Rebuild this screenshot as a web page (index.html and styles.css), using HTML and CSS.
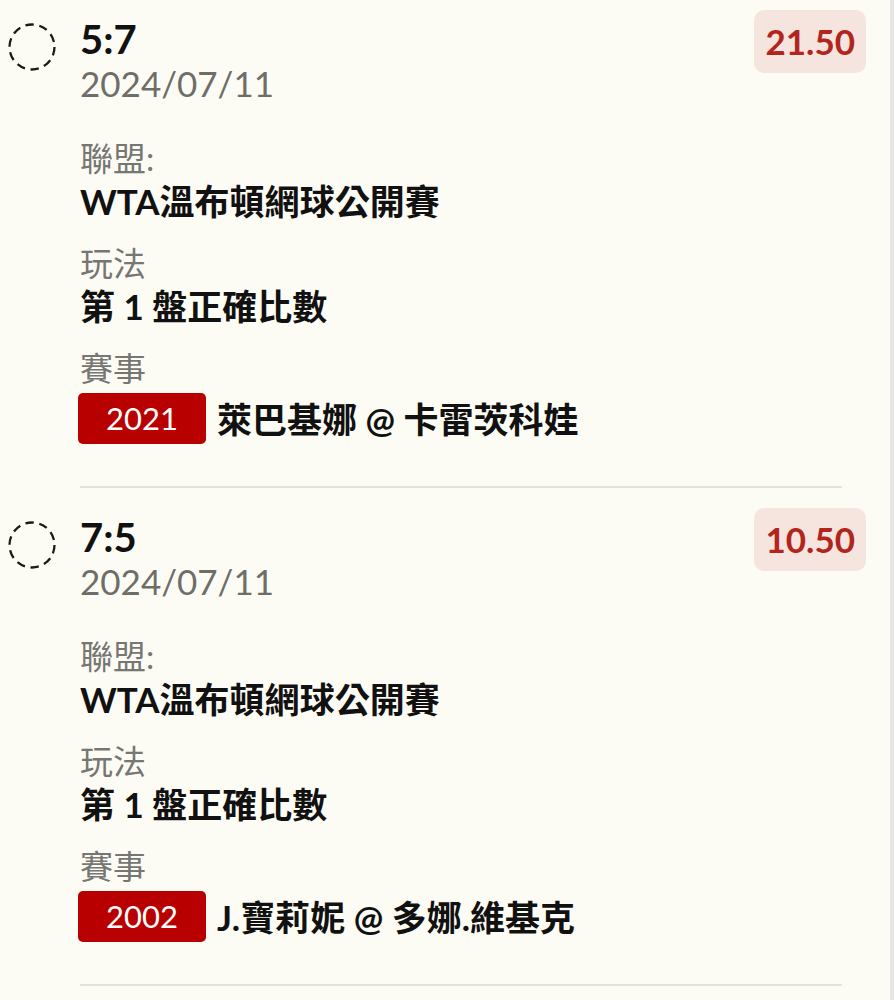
FILE: index.html
```html
<!DOCTYPE html>
<html>
	<head>
		<meta charset="UTF-8">
		<title>注單</title>
		<link rel="stylesheet" href="styles.css">
	</head>
	<body>
		<div class="page">
			<div class="bet">
				<svg class="check" width="48" height="48" viewBox="0 0 48 48">
					<circle cx="24" cy="24" r="22.5" fill="none" stroke="#1a1a1a" stroke-width="2.3" stroke-dasharray="8.5 5.6" />
				</svg>
				<div class="bet-body">
					<div class="bet-head">
						<div>
							<div class="score">5:7</div>
							<div class="date">2024/07/11</div>
						</div>
						<div class="odds">21.50</div>
					</div>
					<div class="label first">聯盟:</div>
					<div class="value">WTA溫布頓網球公開賽</div>
					<div class="label">玩法</div>
					<div class="value">第 1 盤正確比數</div>
					<div class="label">賽事</div>
					<div class="match">
						<span class="code">2021</span>
						<span class="teams">萊巴基娜 @ 卡雷茨科娃</span>
					</div>
				</div>
			</div>
			<div class="divider"></div>

			<div class="bet">
				<svg class="check" width="48" height="48" viewBox="0 0 48 48">
					<circle cx="24" cy="24" r="22.5" fill="none" stroke="#1a1a1a" stroke-width="2.3" stroke-dasharray="8.5 5.6" />
				</svg>
				<div class="bet-body">
					<div class="bet-head">
						<div>
							<div class="score">7:5</div>
							<div class="date">2024/07/11</div>
						</div>
						<div class="odds">10.50</div>
					</div>
					<div class="label first">聯盟:</div>
					<div class="value">WTA溫布頓網球公開賽</div>
					<div class="label">玩法</div>
					<div class="value">第 1 盤正確比數</div>
					<div class="label">賽事</div>
					<div class="match">
						<span class="code">2002</span>
						<span class="teams">J.寶莉妮 @ 多娜.維基克</span>
					</div>
				</div>
			</div>
			<div class="divider"></div>
		</div>
	</body>
</html>
```

FILE: styles.css
```css
*{
	margin: 0;
	padding: 0;
	box-sizing: border-box;
}
body{
	background: #fdfcf4;
	font-family: Lato, "Noto Sans CJK TC", sans-serif;
	color: #111;
}
.page{
	min-height: 100vh;
	padding-left: 8px;
	border-right: 4px solid #e6e6e4;
}
.bet{
	display: flex;
	align-items: flex-start;
	padding-top: 10px;
}
.check{
	flex: none;
	display: block;
	margin-top: 13px;
}
.bet-body{
	flex: 1;
	margin-left: 24px;
	padding-right: 24px;
}
.bet-head{
	display: flex;
	justify-content: space-between;
	align-items: flex-start;
}
.score{
	margin-top: 6px;
	font-size: 40px;
	font-weight: 700;
	line-height: 46px;
}
.date{
	font-size: 35px;
	line-height: 42px;
	color: #6e6e69;
}
.odds{
	background: #f6e5df;
	color: #b3241c;
	font-size: 35px;
	font-weight: 700;
	line-height: 43px;
	padding: 10px 11px;
	border-radius: 10px;
}
.label{
	font-size: 33px;
	line-height: 40px;
	color: #767673;
	margin-top: 21px;
}
.label.first{
	margin-top: 34px;
}
.value{
	font-size: 35px;
	font-weight: 700;
	line-height: 42px;
	margin-top: 2px;
}
.match{
	display: flex;
	align-items: center;
	margin-top: 5px;
}
.code{
	background: #b80000;
	color: #fff;
	font-size: 31px;
	line-height: 51px;
	padding: 0 28px;
	border-radius: 5px;
	margin-left: -2px;
}
.teams{
	margin-left: 11px;
	font-size: 35px;
	font-weight: 700;
	line-height: 42px;
}
.divider{
	height: 2px;
	background: #e4e2db;
	margin: 42px 48px 10px 72px;
}
```
